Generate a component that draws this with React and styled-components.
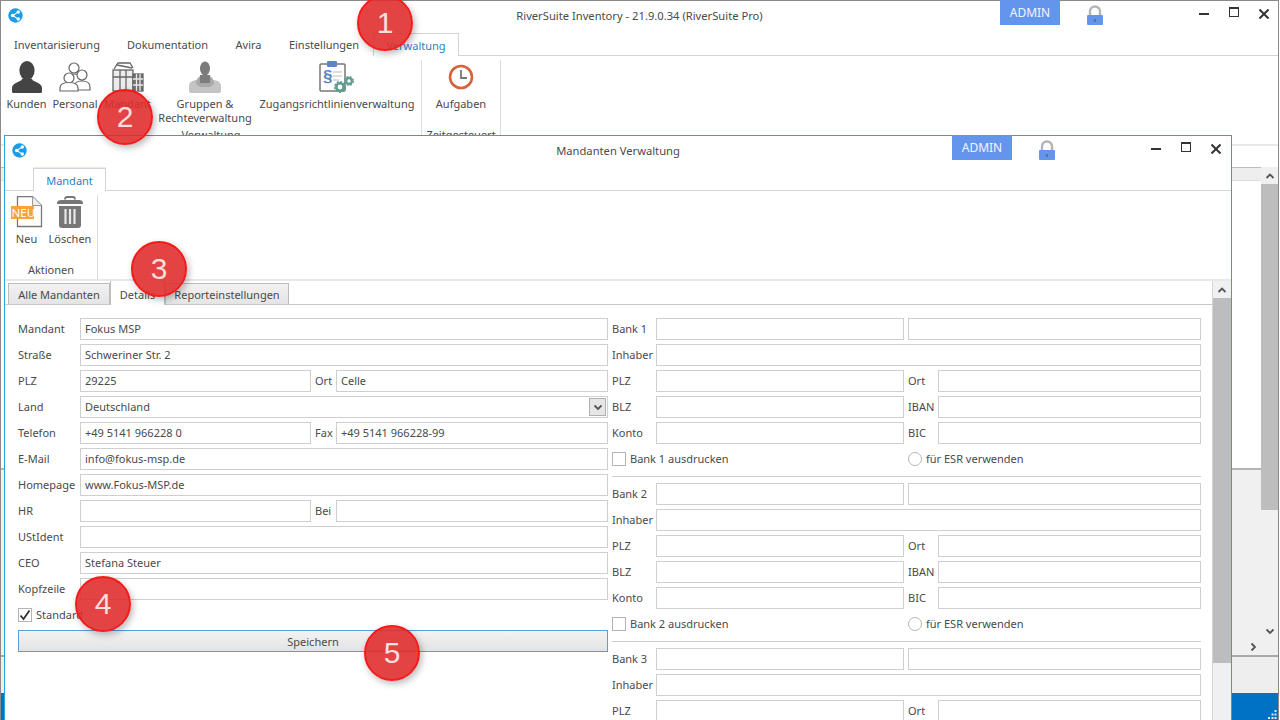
import React from 'react';
import styled, { createGlobalStyle } from 'styled-components';

const GlobalStyle = createGlobalStyle`
  html, body {
    margin: 0;
    padding: 0;
    background: #fff;
  }
  * {
    box-sizing: border-box;
  }
  body {
    font-family: "Noto Sans", "Open Sans", sans-serif;
    font-size: 11px;
    color: #4a4a4a;
  }
`;

const ShareLogo = () => (
  <svg width="15" height="15" viewBox="0 0 15 15">
    <circle cx="7.5" cy="7.5" r="7.2" fill="#1c9be6" />
    <path d="M10.2 3.9 4.8 7.5l5.4 3.6" fill="none" stroke="#fff" strokeWidth="1.1" />
    <circle cx="4.7" cy="7.5" r="1.8" fill="#fff" />
    <circle cx="10.3" cy="4" r="1.7" fill="#fff" />
    <circle cx="10.3" cy="11" r="1.7" fill="#fff" />
  </svg>
);

const LockIcon = () => (
  <svg width="16" height="20" viewBox="0 0 16 20">
    <path d="M3 10V6.5a5 5 0 0 1 10 0V10" fill="none" stroke="#b5b5b5" strokeWidth="2.4" />
    <rect x="0" y="10" width="16" height="10" rx="1" fill="#6495ed" />
    <rect x="7.2" y="14" width="1.6" height="3" fill="#5a6a88" />
  </svg>
);

const Chevron = ({ dir = 'up', size = 10 }) => {
  const points = {
    up: '1.5,7 5,3.5 8.5,7',
    down: '1.5,3.5 5,7 8.5,3.5',
    right: '3.5,1.5 7,5 3.5,8.5',
  };
  return (
    <svg width={size} height={size} viewBox="0 0 10 10">
      <polyline points={points[dir]} fill="none" stroke="#555" strokeWidth="1.8" />
    </svg>
  );
};

const KundenIcon = () => (
  <svg width="32" height="32" viewBox="0 0 32 32">
    <ellipse cx="16" cy="9.5" rx="7.6" ry="9.5" fill="#444" />
    <path d="M2 32c-.8 0-1-1-1-2v-3c0-4 5-5.500 9-7.500l1.500-2h9l1.500 2c4 2 9 3.500 9 7.500v3c0 1-.3 2-1 2z" fill="#444" />
  </svg>
);

const PersonalIcon = () => (
  <svg width="32" height="32" viewBox="0 0 32 32" fill="#fff" stroke="#666" strokeWidth="1.2">
    <circle cx="15" cy="7" r="5" />
    <path d="M7 20c0-5 3-7 8-7s8 2 8 7" />
    <circle cx="23" cy="14" r="5" />
    <path d="M15 29v-3c0-4 3-6 8-6s8 2 8 6v3z" />
    <circle cx="10" cy="17" r="5" />
    <path d="M1 30v-3c0-4 4-5.500 9-5.500s9 1.500 9 5.500v3z" />
  </svg>
);

const MandantIcon = () => (
  <svg width="32" height="32" viewBox="0 0 32 32" fill="none" stroke="#666" strokeWidth="1.3">
    <path d="M2 8 6 2h12l3 5" />
    <path d="M5 4l15 3" />
    <rect x="1" y="9" width="20" height="21" fill="#ececec" />
    <path d="M1 16h20M8 9v21M14 9v21" />
    <rect x="21" y="13" width="10" height="17" fill="#6f6f6f" />
    <path d="M24.500 13v17M28 13v17M21 18h10M21 24h10" stroke="#e8e8e8" />
  </svg>
);

const GruppenIcon = () => (
  <svg width="32" height="32" viewBox="0 0 32 32">
    <path d="M0 30v-5c0-4 4-6 9-6s7 2 7 6c0-4 2-6 7-6s9 2 9 6v5c0 1-1 2-2 2H2c-1 0-2-1-2-2z" fill="#c4c4c4" />
    <path d="M7 23c0-6 4-9 9-9s9 3 9 9l-4 3h-10z" fill="#a9a9a9" />
    <ellipse cx="16" cy="7.500" rx="5" ry="7" fill="#7c7c7c" />
    <path d="M11 14h10v8H11z" fill="#7c7c7c" />
  </svg>
);

const RichtlinienIcon = () => (
  <svg width="36" height="32" viewBox="0 0 36 32">
    <rect x="1" y="3" width="25" height="27" rx="1" fill="#fff" stroke="#777" strokeWidth="1.5" />
    <rect x="8" y="0" width="10" height="6" rx="1" fill="#5b86c5" />
    <text x="4" y="21" fontSize="17" fontWeight="700" fill="#5b86c5" fontFamily="Liberation Sans, sans-serif">§</text>
    <path d="M14 11h9M14 15h9M14 19h6" stroke="#bbb" strokeWidth="1.2" />
    <circle cx="21" cy="26" r="3.700" fill="none" stroke="#5f9e8f" strokeWidth="2.600" />
    <circle cx="21" cy="26" r="5.300" fill="none" stroke="#5f9e8f" strokeWidth="1.600" strokeDasharray="2 1.500" />
    <circle cx="30" cy="20" r="2.800" fill="none" stroke="#5f9e8f" strokeWidth="2.200" />
    <circle cx="30" cy="20" r="4.300" fill="none" stroke="#5f9e8f" strokeWidth="1.400" strokeDasharray="2 1.400" />
  </svg>
);

const ClockIcon = () => (
  <svg width="32" height="32" viewBox="0 0 32 32">
    <circle cx="16" cy="16" r="11" fill="#fff" stroke="#d8623c" strokeWidth="2.600" />
    <path d="M16 9v8h6" fill="none" stroke="#777" strokeWidth="1.800" />
  </svg>
);

const NeuIcon = () => (
  <svg width="32" height="32" viewBox="0 0 32 32">
    <path d="M6.500 .5h15l9 9v21h-24z" fill="#fff" stroke="#777" strokeWidth="1.300" />
    <path d="M21.500 .5v9h9" fill="#eee" stroke="#999" strokeWidth="1" />
    <rect x="0" y="10" width="23" height="13" fill="#f9a33a" />
    <text x="0.500" y="21" fontSize="11.500" fill="#fff" fontFamily="Noto Sans, sans-serif">NEU</text>
  </svg>
);

const TrashIcon = () => (
  <svg width="32" height="32" viewBox="0 0 32 32">
    <path d="M11 3.500c0-2 1-2.500 2-2.500h6c1 0 2 .5 2 2.500" fill="none" stroke="#777" strokeWidth="1.800" />
    <path d="M3 7c0-2 2-3 4-3h18c2 0 4 1 4 3v1H3z" fill="#777" />
    <path d="M5 10h22v19c0 2-1 3-3 3H8c-2 0-3-1-3-3z" fill="#777" />
    <path d="M11.500 13v15M16 13v15M20.500 13v15" stroke="#e8e8e8" strokeWidth="2.200" />
  </svg>
);

const Screen = styled.div`
  position: relative;
  width: 1280px;
  height: 720px;
  overflow: hidden;
`;

const MainWindow = styled.div`
  display: flex;
  flex-direction: column;
  width: 1279px;
  height: 720px;
  border: 1px solid #8a8a8a;
  border-bottom: 0;
  background: #fff;
`;

const DialogWindow = styled.div`
  position: absolute;
  left: 4px;
  top: 135px;
  width: 1228px;
  height: 600px;
  display: flex;
  flex-direction: column;
  border: 1px solid #2aa3e3;
  background: #fff;
`;

const TitleBar = styled.div`
  display: grid;
  grid-template-columns: 1fr auto 1fr;
  flex: none;
  height: 32px;
`;

const LogoCell = styled.div`
  padding: 7px 0 0 7px;
`;

const TitleText = styled.div`
  padding-top: 7px;
  font-size: 11.2px;
  line-height: 16px;
  color: #4a4a4a;
`;

const TitleRight = styled.div`
  display: flex;
  justify-content: flex-end;
  align-items: flex-start;
  padding-right: ${(p) => p.$right}px;
`;

const RoleBadge = styled.div`
  width: 60px;
  height: 25px;
  margin-top: -1px;
  background: #6495ed;
  color: #f2f5fd;
  font-size: 12px;
  line-height: 25px;
  text-align: center;
`;

const LockWrap = styled.div`
  height: 20px;
  margin: 4px 96px 0 27px;
`;

const WinControls = styled.div`
  display: flex;
  gap: 20px;
  padding-top: 6px;
`;

const WinGlyph = styled.span`
  position: relative;
  display: block;
  width: 10px;
  height: 10px;
`;

const MinGlyph = styled(WinGlyph)`
  &::after {
    content: '';
    position: absolute;
    left: 0;
    right: 0;
    top: 6px;
    height: 2px;
    background: #333;
  }
`;

const MaxGlyph = styled(WinGlyph)`
  border: 1px solid #333;
  border-top-width: 2px;
`;

const CloseGlyph = () => (
  <svg width="10" height="10" viewBox="0 0 10 10">
    <path d="M.5.5l9 9M9.500.5l-9 9" stroke="#333" strokeWidth="2" />
  </svg>
);

const RibbonTabs = styled.div`
  display: flex;
  flex: none;
  height: 23px;
  padding-left: ${(p) => p.$inset}px;
  border-bottom: 1px solid #d4d4d4;
`;

const RibbonTab = styled.div`
  width: ${(p) => p.$w}px;
  height: 23px;
  line-height: 24px;
  text-align: center;
  white-space: nowrap;
  color: ${(p) => (p.$active ? '#2a7fcb' : '#4a4a4a')};
  background: #fff;
  ${(p) => p.$active && 'border: 1px solid #d4d4d4; border-bottom: 0; position: relative;'}
  ${(p) => p.$glow && 'box-shadow: 0 -1px 0 #e6eee0;'}
`;

const Ribbon = styled.div`
  display: flex;
  flex: none;
  height: 90px;
  border-bottom: 2px solid #e8e8e8;
`;

const RibbonGroup = styled.div`
  display: flex;
  flex-direction: column;
  width: ${(p) => p.$w}px;
  margin-top: 4px;
  border-right: 1px solid #dcdcdc;
`;

const GroupButtons = styled.div`
  display: flex;
  flex: none;
  height: 67px;
  padding-left: ${(p) => p.$inset || 0}px;
`;

const GroupLabel = styled.div`
  line-height: 16px;
  text-align: center;
  color: #4a4a4a;
`;

const RibbonButton = styled.div`
  display: flex;
  flex-direction: column;
  align-items: center;
  width: ${(p) => p.$w}px;
  padding-top: 1px;
  line-height: 14px;
  text-align: center;
`;

const IconSlot = styled.div`
  height: 32px;
  margin-bottom: 4px;
`;

const Content = styled.div`
  display: flex;
  flex-direction: column;
  flex: 1;
  min-height: 0;
  padding-top: 21px;
`;

const ContentHead = styled.div`
  flex: none;
  height: 14px;
  background: #eee;
  border-top: 1px solid #bbb;
  border-bottom: 1px solid #ddd;
`;

const ContentBody = styled.div`
  display: flex;
  flex: 1;
  min-height: 0;
`;

const ContentMain = styled.div`
  display: flex;
  flex-direction: column;
  flex: 1;
`;

const WhiteArea = styled.div`
  height: 289px;
  border-bottom: 2px solid #b5b5b5;
`;

const GreyArea = styled.div`
  flex: 1;
  background: #f0f0f0;
`;

const HScrollEnd = styled.div`
  display: flex;
  justify-content: flex-end;
  align-items: center;
  flex: none;
  height: 16px;
  padding-right: 3px;
  background: #f0f0f0;
`;

const Footer = styled.div`
  flex: none;
  height: 38px;
  background: #eee;
  border-top: 2px solid #a9a9a9;
`;

const StatusBar = styled.div`
  display: flex;
  justify-content: flex-end;
  align-items: flex-end;
  flex: none;
  height: 27px;
  padding: 0 1px 1px 0;
  background: #0072c6;
`;

const ScrollColumn = styled.div`
  display: flex;
  flex-direction: column;
  flex: none;
  width: ${(p) => p.$w}px;
  margin-top: ${(p) => p.$offset || 0}px;
  background: #f0f0f0;
`;

const ScrollButton = styled.div`
  display: flex;
  align-items: center;
  justify-content: center;
  flex: none;
  height: 17px;
`;

const ScrollThumb = styled.div`
  flex: none;
  height: ${(p) => p.$h}px;
  background: #bdbdbd;
`;

const ScrollTrack = styled.div`
  flex: ${(p) => (p.$h ? 'none' : 1)};
  height: ${(p) => (p.$h ? `${p.$h}px` : 'auto')};
`;

const DialogBody = styled.div`
  display: flex;
  flex: 1;
  min-height: 0;
`;

const PagesArea = styled.div`
  flex: 1;
  min-width: 0;
  overflow: hidden;
  border-right: 1px solid #d4d4d4;
`;

const PageTabs = styled.div`
  display: flex;
  align-items: flex-end;
  height: 24px;
  padding-left: 3px;
  border-bottom: 1px solid #c8c8c8;
`;

const PageTab = styled.div`
  width: ${(p) => p.$w}px;
  height: ${(p) => (p.$active ? 25 : 22)}px;
  margin-bottom: -1px;
  border: 1px solid #bdbdbd;
  border-bottom: ${(p) => (p.$active ? '0' : '1px solid #c8c8c8')};
  background: ${(p) => (p.$active ? '#fff' : 'linear-gradient(#f2f2f2, #e4e4e4)')};
  line-height: ${(p) => (p.$active ? 27 : 21)}px;
  text-align: center;
  white-space: nowrap;
  position: relative;
`;

const FormArea = styled.div`
  display: grid;
  grid-template-columns: 590px 589px;
  column-gap: 4px;
  align-items: start;
  padding: 13px 0 0 13px;
`;

const LeftGrid = styled.div`
  display: grid;
  grid-template-columns: 62px 231px 4px 21px 272px;
  grid-auto-rows: 22px;
  row-gap: 4px;
`;

const BankGrid = styled.div`
  display: grid;
  grid-template-columns: 44px 248px 4px 30px 263px;
  grid-auto-rows: 22px;
  row-gap: 4px;
`;

const FieldLabel = styled.label`
  grid-column: ${(p) => p.$col || 1};
  line-height: 22px;
  white-space: nowrap;
`;

const Field = styled.input`
  grid-column: ${(p) => p.$col || 2};
  width: 100%;
  height: 22px;
  min-width: 0;
  padding: 0 4px 2px;
  border: 1px solid #cfcfcf;
  background: #fff;
  font: inherit;
  color: #4a4a4a;
  outline: none;
`;

const ComboWrap = styled.div`
  position: relative;
  grid-column: 2 / -1;
`;

const ComboArrow = styled.span`
  position: absolute;
  right: 2px;
  top: 2px;
  display: flex;
  align-items: center;
  justify-content: center;
  width: 17px;
  height: 18px;
  background: #e6e6e6;
  border: 1px solid #b0b0b0;
`;

const CheckRow = styled.div`
  display: flex;
  align-items: center;
  gap: 4px;
  grid-column: ${(p) => p.$col};
  line-height: 22px;
  white-space: nowrap;
`;

const CheckBox = styled.span`
  display: flex;
  align-items: center;
  justify-content: center;
  flex: none;
  width: 14px;
  height: 14px;
  border: 1px solid #b5b5b5;
  background: #fff;
`;

const RadioCircle = styled(CheckBox)`
  border-radius: 50%;
`;

const SaveButton = styled.button`
  grid-column: 1 / -1;
  height: 22px;
  padding: 0;
  border: 1px solid #5b9fd8;
  background: linear-gradient(#f3f3f3, #e3e3e3);
  font: inherit;
  color: #4a4a4a;
`;

const BankBlock = styled.div`
  padding-bottom: 6px;
  margin-bottom: 6px;
  border-bottom: 1px solid #cfcfcf;
`;

const StepBadge = styled.div`
  position: absolute;
  left: ${(p) => p.$x - 28}px;
  top: ${(p) => p.$y - 28}px;
  width: 56px;
  height: 56px;
  border: 2px solid #f51b1b;
  border-radius: 50%;
  background: rgba(224, 44, 44, 0.89);
  box-shadow: 2px 3px 7px rgba(0, 0, 0, 0.28);
  color: #fbdede;
  font-family: "Liberation Sans", Arial, sans-serif;
  font-size: 30px;
  line-height: 52px;
  text-align: center;
`;

const GripDots = () => (
  <svg width="9" height="9" viewBox="0 0 9 9" fill="#dfe9f3">
    <rect x="6.500" y="0" width="2" height="2" />
    <rect x="3.500" y="3.500" width="2" height="2" />
    <rect x="6.500" y="3.500" width="2" height="2" />
    <rect x="0" y="7" width="2" height="2" />
    <rect x="3.500" y="7" width="2" height="2" />
    <rect x="6.500" y="7" width="2" height="2" />
  </svg>
);

const WindowTitle = ({ title, right }) => (
  <TitleBar>
    <LogoCell>
      <ShareLogo />
    </LogoCell>
    <TitleText>{title}</TitleText>
    <TitleRight $right={right}>
      <RoleBadge>ADMIN</RoleBadge>
      <LockWrap>
        <LockIcon />
      </LockWrap>
      <WinControls>
        <MinGlyph />
        <MaxGlyph />
        <WinGlyph>
          <CloseGlyph />
        </WinGlyph>
      </WinControls>
    </TitleRight>
  </TitleBar>
);

const mainTabs = [
  { label: 'Inventarisierung', w: 112 },
  { label: 'Dokumentation', w: 109 },
  { label: 'Avira', w: 53 },
  { label: 'Einstellungen', w: 98 },
  { label: 'Verwaltung', w: 86, active: true },
];

const mainButtons = [
  { label: 'Kunden', w: 47, icon: <KundenIcon /> },
  { label: 'Personal', w: 50, icon: <PersonalIcon /> },
  { label: 'Mandant', w: 55, icon: <MandantIcon /> },
  { label: 'Gruppen &\nRechteverwaltung', w: 100, icon: <GruppenIcon /> },
  { label: 'Zugangsrichtlinienverwaltung', w: 164, icon: <RichtlinienIcon /> },
];

const RibbonItem = ({ label, w, icon }) => (
  <RibbonButton $w={w}>
    <IconSlot>{icon}</IconSlot>
    {label.split('\n').map((line) => (
      <span key={line}>{line}</span>
    ))}
  </RibbonButton>
);

const BankSection = ({ n }) => (
  <BankBlock>
    <BankGrid>
      <FieldLabel>Bank {n}</FieldLabel>
      <Field readOnly />
      <Field readOnly $col="4 / -1" />
      <FieldLabel>Inhaber</FieldLabel>
      <Field readOnly $col="2 / -1" />
      <FieldLabel>PLZ</FieldLabel>
      <Field readOnly />
      <FieldLabel $col={4}>Ort</FieldLabel>
      <Field readOnly $col={5} />
      <FieldLabel>BLZ</FieldLabel>
      <Field readOnly />
      <FieldLabel $col={4}>IBAN</FieldLabel>
      <Field readOnly $col={5} />
      <FieldLabel>Konto</FieldLabel>
      <Field readOnly />
      <FieldLabel $col={4}>BIC</FieldLabel>
      <Field readOnly $col={5} />
      <CheckRow $col="1 / 4">
        <CheckBox />
        Bank {n} ausdrucken
      </CheckRow>
      <CheckRow $col="4 / -1">
        <RadioCircle />
        für ESR verwenden
      </CheckRow>
    </BankGrid>
  </BankBlock>
);

const App = () => (
  <Screen>
    <GlobalStyle />
    <MainWindow>
      <WindowTitle title="RiverSuite Inventory - 21.9.0.34 (RiverSuite Pro)" right={9} />
      <RibbonTabs $inset={0}>
        {mainTabs.map((tab) => (
          <RibbonTab key={tab.label} $w={tab.w} $active={tab.active}>
            {tab.label}
          </RibbonTab>
        ))}
      </RibbonTabs>
      <Ribbon>
        <RibbonGroup $w={421}>
          <GroupButtons $inset={2}>
            {mainButtons.map((btn) => (
              <RibbonItem key={btn.label} {...btn} />
            ))}
          </GroupButtons>
          <GroupLabel>Verwaltung</GroupLabel>
        </RibbonGroup>
        <RibbonGroup $w={79}>
          <GroupButtons>
            <RibbonItem label="Aufgaben" w={78} icon={<ClockIcon />} />
          </GroupButtons>
          <GroupLabel>Zeitgesteuert</GroupLabel>
        </RibbonGroup>
      </Ribbon>
      <Content>
        <ContentHead />
        <ContentBody>
          <ContentMain>
            <WhiteArea />
            <GreyArea />
            <HScrollEnd>
              <Chevron dir="right" />
            </HScrollEnd>
          </ContentMain>
          <ScrollColumn $w={17} $offset={-14}>
            <ScrollButton>
              <Chevron dir="up" />
            </ScrollButton>
            <ScrollThumb $h={326} />
            <ScrollTrack />
            <ScrollButton>
              <Chevron dir="down" />
            </ScrollButton>
            <ScrollTrack $h={16} />
          </ScrollColumn>
        </ContentBody>
      </Content>
      <Footer />
      <StatusBar>
        <GripDots />
      </StatusBar>
    </MainWindow>

    <DialogWindow>
      <WindowTitle title="Mandanten Verwaltung" right={10} />
      <RibbonTabs $inset={28}>
        <RibbonTab $w={73} $active $glow>
          Mandant
        </RibbonTab>
      </RibbonTabs>
      <Ribbon>
        <RibbonGroup $w={93}>
          <GroupButtons>
            <RibbonItem label="Neu" w={43} icon={<NeuIcon />} />
            <RibbonItem label="Löschen" w={44} icon={<TrashIcon />} />
          </GroupButtons>
          <GroupLabel>Aktionen</GroupLabel>
        </RibbonGroup>
      </Ribbon>
      <DialogBody>
        <PagesArea>
          <PageTabs>
            <PageTab $w={102}>Alle Mandanten</PageTab>
            <PageTab $w={55} $active>
              Details
            </PageTab>
            <PageTab $w={124}>Reporteinstellungen</PageTab>
          </PageTabs>
          <FormArea>
            <LeftGrid>
              <FieldLabel>Mandant</FieldLabel>
              <Field readOnly $col="2 / -1" value="Fokus MSP" />
              <FieldLabel>Straße</FieldLabel>
              <Field readOnly $col="2 / -1" value="Schweriner Str. 2" />
              <FieldLabel>PLZ</FieldLabel>
              <Field readOnly value="29225" />
              <FieldLabel $col={4}>Ort</FieldLabel>
              <Field readOnly $col={5} value="Celle" />
              <FieldLabel>Land</FieldLabel>
              <ComboWrap>
                <Field readOnly value="Deutschland" />
                <ComboArrow>
                  <Chevron dir="down" />
                </ComboArrow>
              </ComboWrap>
              <FieldLabel>Telefon</FieldLabel>
              <Field readOnly value="+49 5141 966228 0" />
              <FieldLabel $col={4}>Fax</FieldLabel>
              <Field readOnly $col={5} value="+49 5141 966228-99" />
              <FieldLabel>E-Mail</FieldLabel>
              <Field readOnly $col="2 / -1" value="info@fokus-msp.de" />
              <FieldLabel>Homepage</FieldLabel>
              <Field readOnly $col="2 / -1" value="www.Fokus-MSP.de" />
              <FieldLabel>HR</FieldLabel>
              <Field readOnly />
              <FieldLabel $col={4}>Bei</FieldLabel>
              <Field readOnly $col={5} />
              <FieldLabel>UStIdent</FieldLabel>
              <Field readOnly $col="2 / -1" />
              <FieldLabel>CEO</FieldLabel>
              <Field readOnly $col="2 / -1" value="Stefana Steuer" />
              <FieldLabel>Kopfzeile</FieldLabel>
              <Field readOnly $col="2 / -1" />
              <CheckRow $col="1 / -1">
                <CheckBox>
                  <svg width="12" height="12" viewBox="0 0 12 12">
                    <path d="M1.500 6.500 4.500 10 10.500 1.500" fill="none" stroke="#333" strokeWidth="1.800" />
                  </svg>
                </CheckBox>
                Standard
              </CheckRow>
              <SaveButton>Speichern</SaveButton>
            </LeftGrid>
            <div>
              <BankSection n={1} />
              <BankSection n={2} />
              <BankSection n={3} />
            </div>
          </FormArea>
        </PagesArea>
        <ScrollColumn $w={18}>
          <ScrollButton>
            <Chevron dir="up" />
          </ScrollButton>
          <ScrollThumb $h={365} />
          <ScrollTrack />
        </ScrollColumn>
      </DialogBody>
    </DialogWindow>

    <StepBadge $x={385} $y={23}>1</StepBadge>
    <StepBadge $x={125} $y={117}>2</StepBadge>
    <StepBadge $x={159} $y={269}>3</StepBadge>
    <StepBadge $x={103} $y={604}>4</StepBadge>
    <StepBadge $x={392} $y={653}>5</StepBadge>
  </Screen>
);

export default App;
